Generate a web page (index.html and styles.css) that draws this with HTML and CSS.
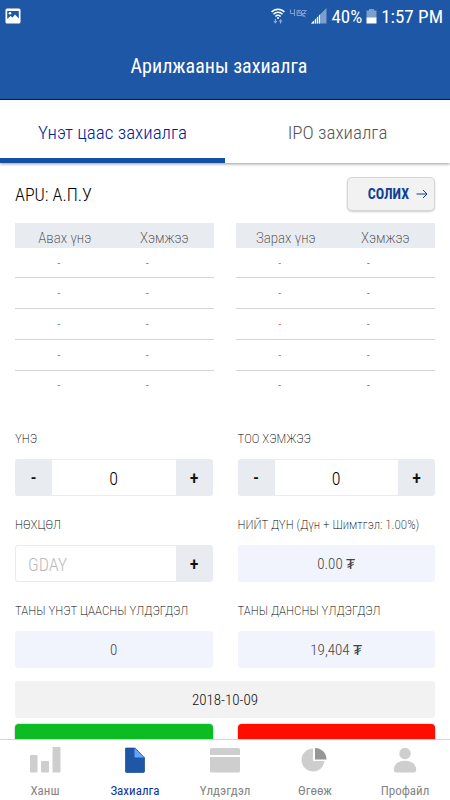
FILE: index.html
```html
<!DOCTYPE html>
<html lang="mn">
<head>
<meta charset="utf-8">
<meta name="viewport" content="width=device-width, initial-scale=1">
<title>Арилжааны захиалга</title>
<link rel="stylesheet" href="styles.css">
</head>
<body>
<header class="top">
  <div class="status">
    <svg class="status-photo" width="16" height="16" viewBox="0 0 16 16" aria-hidden="true"><rect x=".5" y=".5" width="15" height="15" rx="1.500" fill="#fff"/><path fill="#1e57a5" d="M2.200 3h11.600v7.500L10 6.500 7.500 9.500 5.500 8 2.200 11z"/><circle cx="5" cy="5.200" r="1.300" fill="#fff"/></svg>
    <div class="status-right">
      <svg width="14" height="16" viewBox="0 0 14 16" fill="none" stroke="#fff" stroke-width="1.500" aria-hidden="true"><path d="M.6 4C4 .2 10 .2 13.400 4M2.500 6.300c2.500-2.700 6.500-2.700 9 0M4.400 8.500c1.500-1.600 3.700-1.600 5.200 0"/><circle cx="7" cy="10" r="1" fill="#fff" stroke="none"/><path stroke="none" fill="#8faed6" d="M2.500 13 4.400 15.700 6.300 13H5V11H3.800v2zM7.700 13.500 9.600 11 11.500 13.500H10.200v2H9V13.500z"/></svg>
      <svg width="18" height="16" viewBox="0 0 18 16" fill="none" stroke="#7d9fce" aria-hidden="true"><path d="M1.500 1.500v4h4M5.500 1v7M8 2.500h4M8 2.500v5h4M8 5h3.500M13 2.500h4.500M13 5.500h4M13 8h3M8.500 2.500l8 6.500M12.500 3v5M17 2.500l-4 5"/></svg>
      <svg width="16" height="16" viewBox="0 0 16 16" aria-hidden="true"><path fill="#7d9fce" d="M0 15.500 15.500 0v15.500z"/><path fill="#fff" d="M0 15.500 9 6.500v9z"/><path stroke="#1e57a5" stroke-width=".7" d="M3.500 11v5M5.500 9v7M7.500 7v9"/></svg>
      <span class="status-battery">40%</span>
      <svg width="11" height="16" viewBox="0 0 11 16" aria-hidden="true"><path fill="#7d9fce" d="M3 1h5v1.500h2.500V10H.5V2.500H3z"/><path fill="#fff" d="M.5 9.500h10v6H.5z"/></svg>
      <span>1:57 PM</span>
    </div>
  </div>
  <h1 class="title">Арилжааны захиалга</h1>
</header>
<nav class="tabs">
  <a class="tab tab-active" href="#stock">Үнэт цаас захиалга</a>
  <a class="tab" href="#ipo">IPO захиалга</a>
</nav>
<main class="content">
  <div class="symbol-row">
    <h2 class="symbol">APU: А.П.У</h2>
    <button class="change" type="button">СОЛИХ
      <svg width="12" height="10" viewBox="0 0 12 10" fill="none" stroke="#0d3f96" aria-hidden="true"><path d="M.5 5h10.500M7 1l4 4-4 4"/></svg>
    </button>
  </div>
  <div class="books">
    <table class="book buy">
      <thead><tr><th>Авах үнэ</th><th>Хэмжээ</th></tr></thead>
      <tbody>
        <tr><td>-</td><td>-</td></tr>
        <tr><td>-</td><td>-</td></tr>
        <tr><td>-</td><td>-</td></tr>
        <tr><td>-</td><td>-</td></tr>
        <tr><td>-</td><td>-</td></tr>
      </tbody>
    </table>
    <table class="book sell">
      <thead><tr><th>Зарах үнэ</th><th>Хэмжээ</th></tr></thead>
      <tbody>
        <tr><td>-</td><td>-</td></tr>
        <tr><td>-</td><td>-</td></tr>
        <tr><td>-</td><td>-</td></tr>
        <tr><td>-</td><td>-</td></tr>
        <tr><td>-</td><td>-</td></tr>
      </tbody>
    </table>
  </div>
  <form class="order">
    <div class="field">
      <label for="price">ҮНЭ</label>
      <div class="stepper">
        <button class="step" type="button">-</button>
        <input class="number" id="price" type="text" value="0">
        <button class="step" type="button">+</button>
      </div>
    </div>
    <div class="field">
      <label for="qty">ТОО ХЭМЖЭЭ</label>
      <div class="stepper">
        <button class="step" type="button">-</button>
        <input class="number" id="qty" type="text" value="0">
        <button class="step" type="button">+</button>
      </div>
    </div>
    <div class="field">
      <label for="term">НӨХЦӨЛ</label>
      <div class="stepper">
        <input class="term" id="term" type="text" placeholder="GDAY">
        <button class="step" type="button">+</button>
      </div>
    </div>
    <div class="field">
      <label for="total">НИЙТ ДҮН (Дүн + Шимтгэл: 1.00%)</label>
      <output class="value" id="total">0.00 ₮</output>
    </div>
    <div class="field">
      <label for="holding">ТАНЫ ҮНЭТ ЦААСНЫ ҮЛДЭГДЭЛ</label>
      <output class="value" id="holding">0</output>
    </div>
    <div class="field">
      <label for="balance">ТАНЫ ДАНСНЫ ҮЛДЭГДЭЛ</label>
      <output class="value" id="balance">19,404 ₮</output>
    </div>
  </form>
  <button class="date" type="button">2018-10-09</button>
  <div class="actions">
    <button class="action action-buy" type="button"></button>
    <button class="action action-sell" type="button"></button>
  </div>
</main>
<nav class="bottom">
  <a class="item" href="#rates"><svg width="32" height="28" viewBox="0 0 32 28" fill="#cecece" aria-hidden="true"><rect x="1" y="10" width="7.500" height="17.500" rx="1"/><rect x="12" y="16" width="8" height="11.500" rx="1"/><rect x="23.500" y="2" width="8" height="25.500" rx="1"/></svg>Ханш</a>
  <a class="item item-active" href="#orders"><svg width="32" height="28" viewBox="0 0 32 28" aria-hidden="true"><path fill="#1e57a5" stroke="#063394" stroke-width=".6" d="M7 3h9l9.500 9.500V26.500a1 1 0 0 1-1 1H7.500a1 1 0 0 1-1-1V3.500a.5.5 0 0 1 .5-.5z"/><path fill="#66a3ff" d="M15.500 3 25.500 12.500h-9a1 1 0 0 1-1-1z"/></svg>Захиалга</a>
  <a class="item" href="#balance-page"><svg width="32" height="28" viewBox="0 0 32 28" fill="#cecece" aria-hidden="true"><path d="M2.500 3h27A1.500 1.500 0 0 1 31 4.500V10H1V4.500A1.500 1.500 0 0 1 2.500 3zM1 12h30v14a1.500 1.500 0 0 1-1.500 1.500h-27A1.500 1.500 0 0 1 1 26z"/></svg>Үлдэгдэл</a>
  <a class="item" href="#returns"><svg width="32" height="28" viewBox="0 0 32 28" aria-hidden="true"><path fill="#cecece" d="M14 3.500a11.500 11.500 0 1 0 11.500 12.500H14z"/><path fill="#969696" d="M16 3a11.500 11.500 0 0 1 11.500 11.500H16z"/></svg>Өгөөж</a>
  <a class="item" href="#profile"><svg width="32" height="28" viewBox="0 0 32 28" fill="#cecece" aria-hidden="true"><circle cx="16" cy="8.500" r="5.700"/><path d="M7.500 27.500c-2.500 0-2.700-1.500-2.700-3 0-5 5-8.700 11.200-8.700s11.200 3.700 11.200 8.700c0 1.500-.2 3-2.700 3z"/></svg>Профайл</a>
</nav>
</body>
</html>
```
FILE: styles.css
```css
* { box-sizing: border-box; }

body {
  margin: 0;
  height: 100vh;
  display: flex;
  flex-direction: column;
  background: #fff;
  color: #111;
  font-family: "Roboto Condensed", "Liberation Sans Narrow", Roboto, sans-serif;
}

button, input {
  margin: 0;
  padding: 0;
  border: 0;
  background: none;
  color: inherit;
  font: inherit;
}

a { color: inherit; text-decoration: none; }
h1, h2 { margin: 0; font-weight: 400; }

.top {
  flex: none;
  background: #1e57a5;
  color: #fff;
  border-bottom: 1px solid #00127e;
}

.status {
  height: 32px;
  padding: 0 7px 0 5px;
  display: flex;
  align-items: center;
  justify-content: space-between;
  font-size: 19px;
}

.status-right { display: flex; align-items: center; gap: 4px; }

.title {
  padding: 20px 12px 18px 0;
  font-size: 20px;
  line-height: 29px;
  text-align: center;
}

.tabs {
  flex: none;
  display: flex;
  box-shadow: 0 1px 3px rgba(0, 0, 0, .4);
}

.tab {
  flex: 1;
  padding-top: 7px;
  border-bottom: 5px solid transparent;
  font-size: 19px;
  font-weight: 350;
  line-height: 51px;
  text-align: center;
  color: #555;
}

.tab-active { color: #00209a; border-color: #1150a5; }

.content {
  flex: 1;
  min-height: 0;
  overflow: hidden;
  padding: 14px 15px 0;
}

.symbol-row {
  display: flex;
  align-items: center;
  justify-content: space-between;
}

.symbol { font-size: 18px; font-weight: 350; color: #000; }

.change {
  display: flex;
  align-items: center;
  gap: 7px;
  height: 34px;
  padding: 0 6px 0 20px;
  border: 1px solid #d6d6d6;
  border-radius: 5px;
  background: #f2f2f2;
  box-shadow: 0 1px 2px rgba(0, 0, 0, .2);
  color: #0d3f96;
  font-size: 14px;
  font-weight: 700;
}

.books {
  display: grid;
  grid-template-columns: 1fr 1fr;
  gap: 22px;
  margin-top: 12px;
}

.book {
  width: 100%;
  height: 177px;
  border-collapse: collapse;
  table-layout: fixed;
  font-size: 15px;
  font-weight: 200;
  color: #333;
  text-align: center;
}

.book th { height: 25px; padding: 4px 0 0; background: #e8ebf0; font-weight: 200; }
.book td { padding: 2px 34px 0 0; font-size: 12px; font-weight: 300; color: #555; }
.book td:first-child { padding-right: 12px; }
.book tbody tr:not(:last-child) { border-bottom: 1px solid #d2d3dc; }
.buy td:first-child { color: #2b7a2b; }
.sell td:first-child { color: #f22; }

.order {
  display: grid;
  grid-template-columns: 1fr 1fr;
  gap: 20px 25px;
  margin-top: 30px;
}

.field { min-width: 0; display: flex; flex-direction: column; gap: 11px; }
.field label { font-size: 13px; font-weight: 200; line-height: 18px; white-space: nowrap; color: #000; }

.stepper {
  display: flex;
  height: 37px;
  border-radius: 3px;
  overflow: hidden;
  background: #e8ebf0;
}

.step { width: 37px; flex: none; font-size: 18px; font-weight: 500; }

.number, .term {
  flex: 1;
  min-width: 0;
  background: #fff;
  border: solid #ebebed;
  font-size: 18px;
  font-weight: 350;
}

.number { border-width: 1px 0; padding-top: 2px; text-align: center; color: #000; }
.term { border-width: 1px 0 1px 1px; border-radius: 3px 0 0 3px; padding: 2px 0 0 12px; }
.term::placeholder { color: #bbb; opacity: 1; }

.value {
  height: 37px;
  border-radius: 3px;
  background: #f1f4fc;
  color: #444;
  font-size: 15px;
  font-weight: 300;
  line-height: 39px;
  text-align: center;
}

.date {
  display: block;
  width: 100%;
  height: 37px;
  margin-top: 13px;
  border-radius: 3px;
  background: #f2f2f2;
  font-size: 15px;
  font-weight: 300;
}

.actions { display: flex; gap: 25px; margin-top: 6px; }
.action { flex: 1; height: 40px; border-radius: 4px; box-shadow: 0 0 2px rgba(0, 0, 0, .4); }
.action-buy { background: #0bbd22; }
.action-sell { background: #ff0d00; }

.bottom {
  flex: none;
  display: flex;
  padding: 5px 0 2px;
  border-top: 1px solid #d4d4d4;
  background: #fff;
}

.item {
  flex: 1;
  display: flex;
  flex-direction: column;
  align-items: center;
  gap: 10px;
  font-size: 13px;
  line-height: 15px;
  color: #858585;
}

.item-active { color: #0a359a; }
```
